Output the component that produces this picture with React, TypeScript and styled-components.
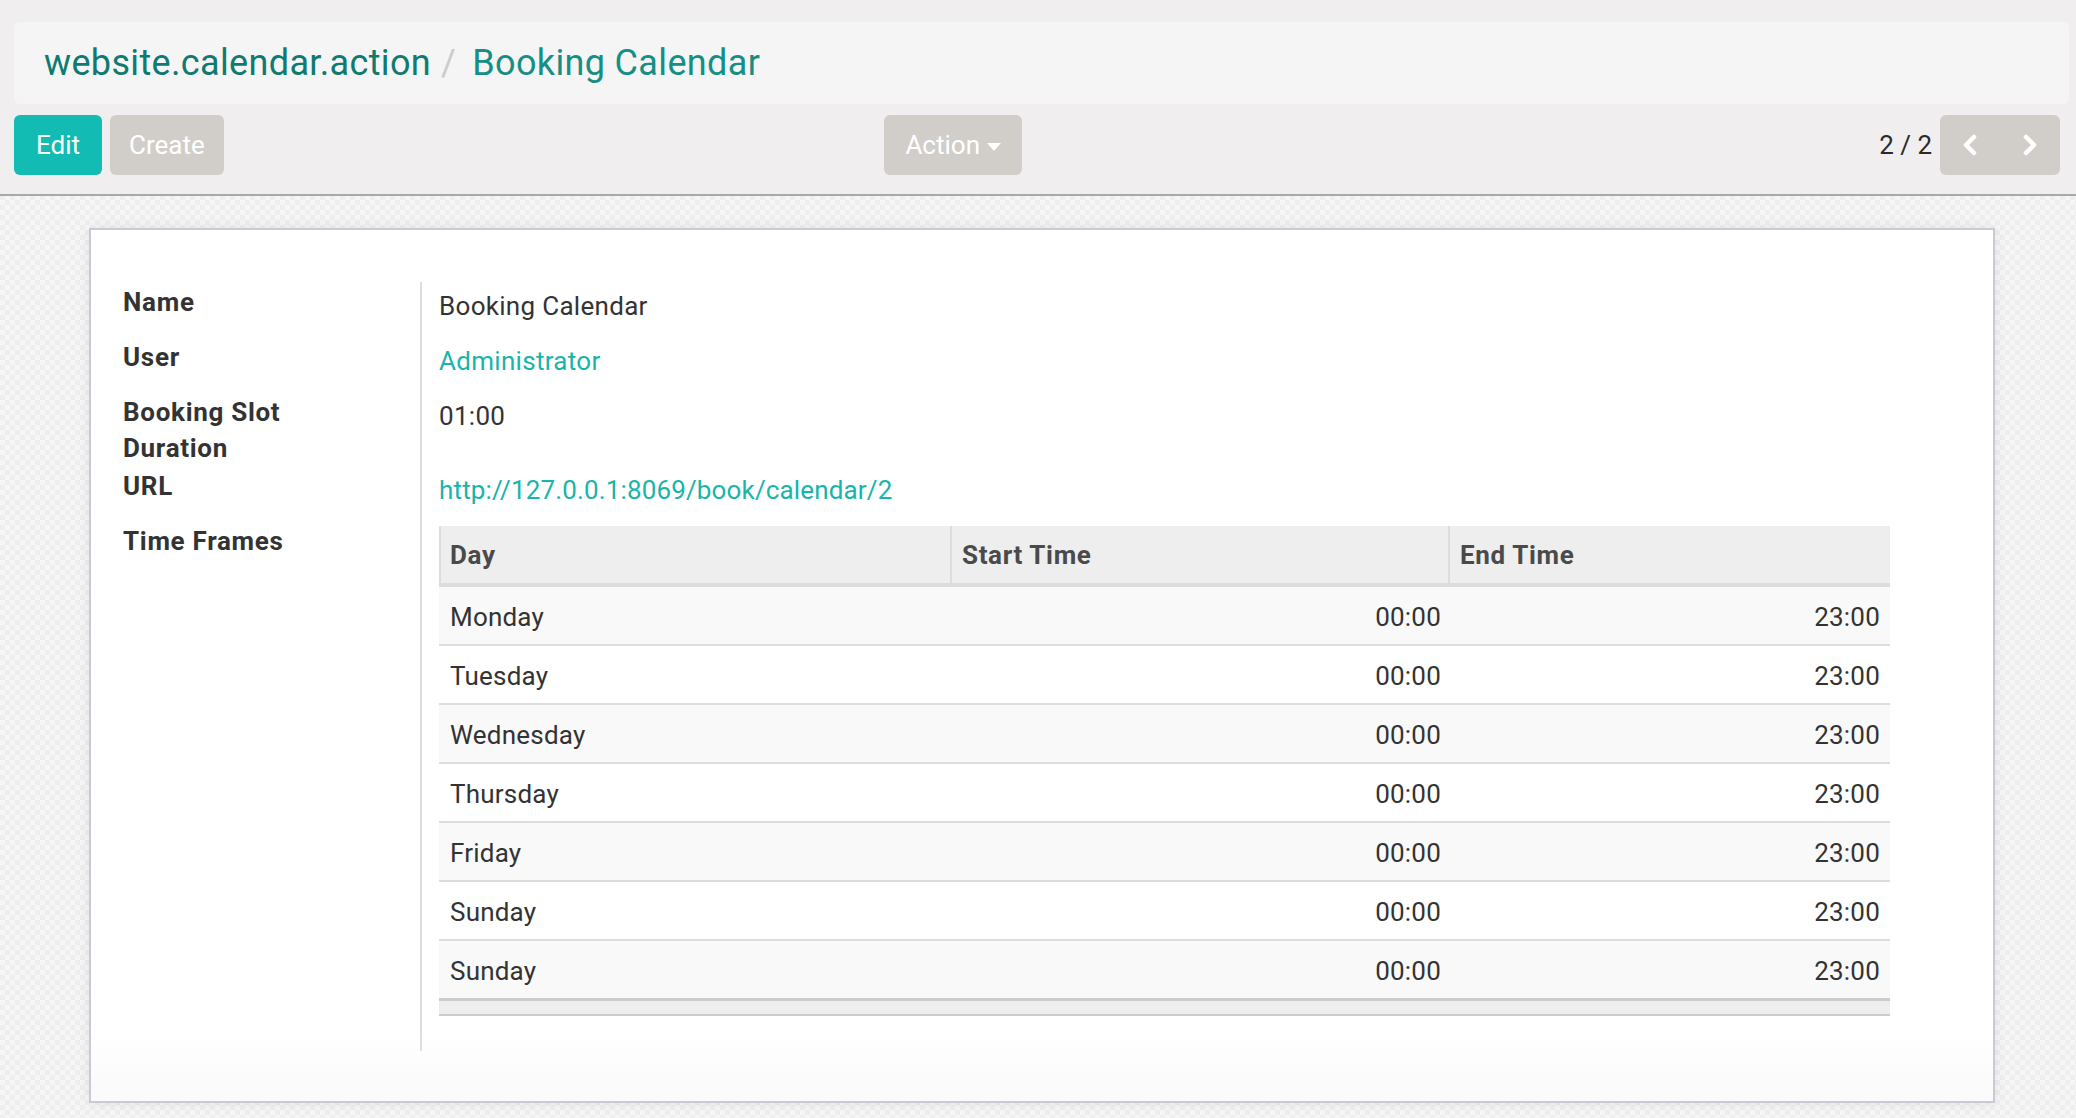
import React from "react";
import styled, { createGlobalStyle } from "styled-components";

const GlobalStyle = createGlobalStyle`
  html, body { margin: 0; padding: 0; }
  html { height: 1118px; overflow: hidden; }
  body {
    font-family: Roboto, "Noto Sans", "DejaVu Sans", sans-serif;
    color: #333333;
    background-color: #f6f6f6;
    background-image: conic-gradient(#eeeeee 25%, transparent 0 50%, #eeeeee 0 75%, transparent 0);
    background-size: 10px 10px;
    height: 1118px;
  }
  * { box-sizing: border-box; }
`;

const Page = styled.div`
  display: flex;
  flex-direction: column;
  height: 1118px;
`;

const ControlPanel = styled.header`
  background: #f0eeee;
  height: 196px;
  padding: 22px 7px 0 14px;
  border-bottom: 2px solid #a9a9a9;
`;

const Breadcrumbs = styled.nav`
  height: 82px;
  background: #f5f5f5;
  border-radius: 6px;
  padding-left: 30px;
  display: flex;
  align-items: center;
  font-size: 36px;
  letter-spacing: 0.35px;
`;

const Crumb = styled.span<{ $active?: boolean }>`
  color: ${(p) => (p.$active ? "#158f85" : "#0f7a71")};
`;

const Sep = styled.span`
  color: #cccccc;
  padding: 0 16px 0 10px;
`;

const ButtonsRow = styled.div`
  margin-top: 11px;
  height: 60px;
  padding-right: 9px;
  display: flex;
  align-items: center;
`;

const LeftHalf = styled.div`
  width: 1008px;
  display: flex;
  justify-content: space-between;
`;

const RightHalf = styled.div`
  flex: 1;
  display: flex;
  justify-content: flex-end;
  align-items: center;
  gap: 8px;
`;

const ButtonGroup = styled.div`
  display: flex;
  gap: 8px;
`;

const Btn = styled.button<{ $primary?: boolean; $pad?: number }>`
  height: 60px;
  padding: 0 ${(p) => p.$pad ?? 22}px;
  border: none;
  border-radius: 6px;
  font-family: inherit;
  font-size: 26px;
  color: #ffffff;
  background: ${(p) => (p.$primary ? "#12bcb3" : "#d1ceca")};
  display: flex;
  align-items: center;
  gap: 7px;
  cursor: pointer;
`;

const Caret = styled.span`
  display: inline-block;
  width: 0;
  height: 0;
  border-top: 8px solid #ffffff;
  border-left: 7px solid transparent;
  border-right: 7px solid transparent;
  margin-top: 4px;
`;

const PagerValue = styled.span`
  font-size: 26px;
  color: #2a2a2a;
`;

const PagerGroup = styled.div`
  display: flex;
  background: #d1ceca;
  border-radius: 6px;
  overflow: hidden;
`;

const PagerBtn = styled.button`
  width: 60px;
  height: 60px;
  border: none;
  background: transparent;
  display: flex;
  align-items: center;
  justify-content: center;
  padding: 0;
`;

const Sheet = styled.main`
  margin: 32px 0 14px 89px;
  width: 1906px;
  height: 875px;
  background: linear-gradient(#ffffff 0, #ffffff 92%, #fafafa 100%);
  border: 2px solid #cbc9d3;
  box-shadow: 0 0 12px rgba(0, 0, 0, 0.08);
  padding: 52px 103px 50px 32px;
`;

const FieldGrid = styled.div`
  display: grid;
  grid-template-columns: 297px 1fr;
`;

const Label = styled.div`
  font-size: 26px;
  font-weight: 700;
  line-height: 36px;
  letter-spacing: 0.7px;
  padding: 2px 80px 0 0;
  color: #333333;
`;

const Value = styled.div<{ $last?: boolean }>`
  font-size: 26px;
  line-height: 37px;
  letter-spacing: 0.3px;
  border-left: 2px solid #dddddd;
  padding: ${(p) => (p.$last ? "5px 0 35px 17px" : "6px 0 12px 17px")};
`;

const Link = styled.a<{ $tight?: boolean }>`
  color: #19b4aa;
  text-decoration: none;
  letter-spacing: ${(p) => (p.$tight ? "0.15px" : "0.3px")};
`;

const Table = styled.table`
  width: 100%;
  table-layout: fixed;
  border-collapse: separate;
  border-spacing: 0;
  font-size: 26px;
  line-height: 37px;
  letter-spacing: 0.2px;
`;

const Th = styled.th<{ $first?: boolean }>`
  background: #eeeeee;
  color: #4a4a4a;
  font-weight: 700;
  letter-spacing: 0.65px;
  text-align: left;
  padding: 11px 11px 9px ${(p) => (p.$first ? "9px" : "10px")};
  border-bottom: 4px solid #dddddd;
  border-left: 2px solid #dddddd;
`;

const Row = styled.tr`
  &:nth-child(odd) td { background: #f9f9f9; }
  & + & td { border-top: 2px solid #dddddd; }
`;

const Td = styled.td<{ $num?: boolean; $padRight?: number }>`
  padding: 12px ${(p) => p.$padRight ?? 11}px 8px 11px;
  text-align: ${(p) => (p.$num ? "right" : "left")};
  color: #333333;
  background: #ffffff;
`;

const FootCell = styled.td`
  height: 18px;
  padding: 0;
  background: #eeeeee;
  border-top: 3px solid #cccccc;
  border-bottom: 2px solid #cccccc;
`;

const Chevron = ({ dir }: { dir: "left" | "right" }) => (
  <svg width="16" height="22" viewBox="0 0 16 22">
    <polyline
      points={dir === "left" ? "12,3 4,11 12,19" : "4,3 12,11 4,19"}
      fill="none"
      stroke="#ffffff"
      strokeWidth="4.5"
      strokeLinecap="round"
      strokeLinejoin="round"
    />
  </svg>
);

const days = ["Monday", "Tuesday", "Wednesday", "Thursday", "Friday", "Sunday", "Sunday"];

export default function App() {
  return (
    <Page>
      <GlobalStyle />
      <ControlPanel>
        <Breadcrumbs>
          <Crumb>website.calendar.action</Crumb>
          <Sep>/</Sep>
          <Crumb $active>Booking Calendar</Crumb>
        </Breadcrumbs>
        <ButtonsRow>
          <LeftHalf>
            <ButtonGroup>
              <Btn $primary $pad={22}>Edit</Btn>
              <Btn $pad={19}>Create</Btn>
            </ButtonGroup>
            <Btn $pad={21}>
              Action <Caret />
            </Btn>
          </LeftHalf>
          <RightHalf>
            <PagerValue>2 / 2</PagerValue>
            <PagerGroup>
              <PagerBtn aria-label="Previous">
                <Chevron dir="left" />
              </PagerBtn>
              <PagerBtn aria-label="Next">
                <Chevron dir="right" />
              </PagerBtn>
            </PagerGroup>
          </RightHalf>
        </ButtonsRow>
      </ControlPanel>
      <Sheet>
        <FieldGrid>
          <Label>Name</Label>
          <Value>Booking Calendar</Value>
          <Label>User</Label>
          <Value>
            <Link href="#">Administrator</Link>
          </Value>
          <Label>Booking Slot Duration</Label>
          <Value>01:00</Value>
          <Label>URL</Label>
          <Value>
            <Link href="#" $tight>
              http://127.0.0.1:8069/book/calendar/2
            </Link>
          </Value>
          <Label>Time Frames</Label>
          <Value $last>
            <Table>
              <colgroup>
                <col style={{ width: 511 }} />
                <col style={{ width: 498 }} />
                <col style={{ width: 442 }} />
              </colgroup>
              <thead>
                <tr>
                  <Th $first>Day</Th>
                  <Th>Start Time</Th>
                  <Th>End Time</Th>
                </tr>
              </thead>
              <tbody>
                {days.map((d, i) => (
                  <Row key={i}>
                    <Td>{d}</Td>
                    <Td $num $padRight={7}>
                      00:00
                    </Td>
                    <Td $num $padRight={10}>
                      23:00
                    </Td>
                  </Row>
                ))}
              </tbody>
              <tfoot>
                <tr>
                  <FootCell />
                  <FootCell />
                  <FootCell />
                </tr>
              </tfoot>
            </Table>
          </Value>
        </FieldGrid>
      </Sheet>
    </Page>
  );
}
